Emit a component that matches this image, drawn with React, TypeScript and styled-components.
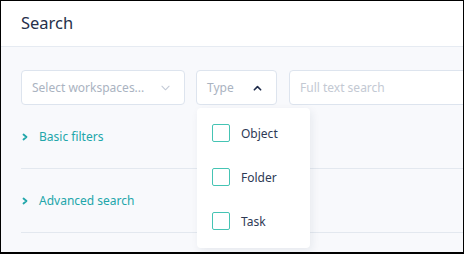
import React, { useState } from "react";
import styled, { createGlobalStyle } from "styled-components";

const GlobalStyle = createGlobalStyle`
  html, body {
    margin: 0;
    padding: 0;
    background: #000;
  }
  * {
    box-sizing: border-box;
  }
`;

const TEAL = "#22a6aa";
const CHECK = "#45c4b4";
const FONT = `"Noto Sans", "Open Sans", "Liberation Sans", sans-serif`;

const types = ["Object", "Folder", "Task"];

const App = () => {
  const [checked, setChecked] = useState<Record<string, boolean>>({});

  const toggle = (name: string) => {
    setChecked((prev) => ({ ...prev, [name]: !prev[name] }));
  };

  return (
    <>
      <GlobalStyle />
      <Frame>
        <Header>
          <Title>Search</Title>
        </Header>
        <Body>
          <InputRow>
            <Field width={164}>
              <Placeholder>Select workspaces...</Placeholder>
              <Chevron viewBox="0 0 10 6" dim>
                <path d="M1 1l4 4 4-4" />
              </Chevron>
            </Field>
            <TypeWrap>
              <Field width={81}>
                <Placeholder>Type</Placeholder>
                <Chevron viewBox="0 0 10 6">
                  <path d="M1.5 5L5 1.5 8.5 5" />
                </Chevron>
              </Field>
              <Menu>
                {types.map((t) => (
                  <MenuItem key={t} onClick={() => toggle(t)}>
                    <Box checked={!!checked[t]} />
                    <ItemLabel>{t}</ItemLabel>
                  </MenuItem>
                ))}
              </Menu>
            </TypeWrap>
            <Field width={200}>
              <Placeholder light>Full text search</Placeholder>
            </Field>
          </InputRow>
          <Section>
            <Caret viewBox="0 0 6 8">
              <path d="M1.5 1.5L4.5 4 1.5 6.5" />
            </Caret>
            <SectionLabel>Basic filters</SectionLabel>
          </Section>
          <Section>
            <Caret viewBox="0 0 6 8">
              <path d="M1.5 1.5L4.5 4 1.5 6.5" />
            </Caret>
            <SectionLabel>Advanced search</SectionLabel>
          </Section>
        </Body>
      </Frame>
    </>
  );
};

const Frame = styled.div`
  width: 464px;
  height: 254px;
  border: 1px solid #000;
  border-bottom-width: 2px;
  background: #f8f9fc;
  overflow: hidden;
  display: flex;
  flex-direction: column;
  font-family: ${FONT};
`;

const Header = styled.div`
  height: 46px;
  flex: none;
  background: #fff;
  border-bottom: 1px solid #e6ebf2;
  display: flex;
  align-items: center;
  padding: 0 0 2px 20px;
`;

const Title = styled.div`
  font-size: 16.5px;
  color: #26304a;
`;

const Body = styled.div`
  padding: 23px 0 0 20px;
  flex: 1;
`;

const InputRow = styled.div`
  display: flex;
  gap: 11px;
  height: 35px;
`;

const Field = styled.div<{ width: number }>`
  width: ${(p) => p.width}px;
  flex: none;
  height: 35px;
  background: #fff;
  border: 1px solid #dde4ee;
  border-radius: 4px;
  display: flex;
  align-items: center;
  justify-content: space-between;
  padding: 0 14px 0 10px;
`;

const Placeholder = styled.span<{ light?: boolean }>`
  font-size: 12px;
  color: ${(p) => (p.light ? "#c3c9d3" : "#aab3c1")};
  white-space: nowrap;
`;

const Chevron = styled.svg<{ dim?: boolean }>`
  width: 9px;
  height: 6px;
  fill: none;
  stroke: ${(p) => (p.dim ? "#c3cad6" : "#1e2b4a")};
  stroke-width: ${(p) => (p.dim ? 1.2 : 1.8)};
  stroke-linecap: round;
  stroke-linejoin: round;
`;

const TypeWrap = styled.div`
  position: relative;
  flex: none;
  margin-right: 1px;
`;

const Menu = styled.div`
  position: absolute;
  top: 38px;
  left: 1px;
  width: 113px;
  height: 140px;
  background: #fff;
  border-radius: 4px;
  box-shadow: 2px 3px 8px rgba(30, 45, 80, 0.08);
  padding: 3px 0 5px;
  z-index: 2;
`;

const MenuItem = styled.div`
  height: 44px;
  display: flex;
  align-items: center;
  padding-left: 15px;
  gap: 11px;
  cursor: pointer;
`;

const Box = styled.span<{ checked: boolean }>`
  width: 18px;
  height: 18px;
  border: 1.5px solid ${CHECK};
  border-radius: 2px;
  background: ${(p) => (p.checked ? CHECK : "#fff")};
`;

const ItemLabel = styled.span`
  font-size: 12px;
  color: #2e3a55;
`;

const Section = styled.div`
  height: 64px;
  display: flex;
  align-items: center;
  gap: 11px;
  padding-left: 1px;
  border-bottom: 1px solid #e3e8ef;
`;

const Caret = styled.svg`
  width: 6px;
  height: 8px;
  fill: none;
  stroke: ${TEAL};
  stroke-width: 1.8;
  stroke-linecap: round;
  stroke-linejoin: round;
  margin-top: 1px;
`;

const SectionLabel = styled.span`
  font-size: 12px;
  color: ${TEAL};
`;

export default App;
